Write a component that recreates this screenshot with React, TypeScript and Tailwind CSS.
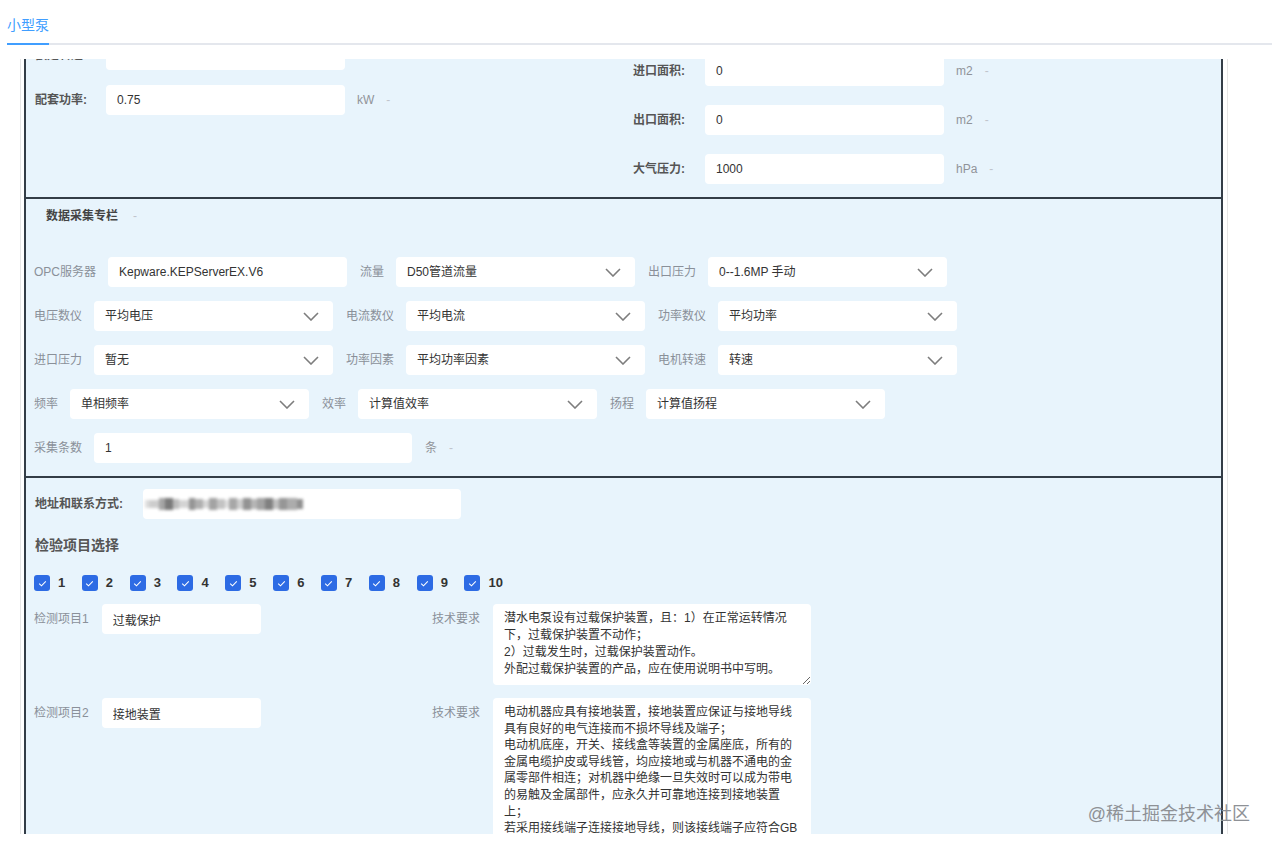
import React from "react";

function Chevron() {
  return (
    <svg width="16" height="9" viewBox="0 0 16 9" fill="none" className="shrink-0">
      <path d="M1 1L8 8L15 1" stroke="#7d7d7d" strokeWidth="1.6" />
    </svg>
  );
}

function TextInput({ value, w }: { value: string; w: string }) {
  return (
    <input
      readOnly
      value={value}
      className={`${w} h-[30px] shrink-0 rounded-[4px] bg-white px-[11px] text-[12px] text-[#333] outline-none`}
    />
  );
}

function SelectBox({ value }: { value: string }) {
  return (
    <div className="flex h-[30px] w-[239px] shrink-0 items-center justify-between rounded-[4px] bg-white pl-[11px] pr-[14px] text-[12px] text-[#333]">
      <span>{value}</span>
      <Chevron />
    </div>
  );
}

function UnitRow({
  label,
  value,
  unit,
  labelCls,
}: {
  label: string;
  value: string;
  unit: string;
  labelCls: string;
}) {
  return (
    <div className="flex h-[30px] items-center">
      <span className={`${labelCls} shrink-0 whitespace-nowrap text-[12px] font-bold leading-[30px] text-[#555]`}>{label}</span>
      <TextInput value={value} w="w-[239px]" />
      <span className="ml-[12px] text-[12px] text-[#909399]">{unit}</span>
      <span className="ml-[12px] text-[12px] text-[#c0c4cc]">-</span>
    </div>
  );
}

function GrayLabel({ children }: { children: React.ReactNode }) {
  return <span className="mr-[12px] shrink-0 whitespace-nowrap text-[12px] leading-[30px] text-[#8a9099]">{children}</span>;
}

function Gap() {
  return <span className="w-[13px] shrink-0" />;
}

function Check({ n }: { n: number }) {
  return (
    <div className="mr-[16.6px] flex items-center gap-[8px]">
      <span className="flex h-[16px] w-[16px] items-center justify-center rounded-[3px] bg-[#2d6be4]">
        <svg width="9" height="7" viewBox="0 0 9 7" fill="none">
          <path d="M1.2 3.6L3.5 5.8L7.8 1.3" stroke="white" strokeWidth="1.1" />
        </svg>
      </span>
      <span className="text-[13px] font-bold leading-[16px] text-[#333]">{n}</span>
    </div>
  );
}

const blurBlocks: [number, number, string][] = [
  [4, 8, "#dedede"],
  [10, 8, "#cdcdcd"],
  [6, 12, "#a5a5a5"],
  [8, 12, "#7a7a7a"],
  [6, 10, "#bcbcbc"],
  [10, 8, "#d4d4d4"],
  [6, 12, "#959595"],
  [8, 10, "#afafaf"],
  [6, 8, "#d6d6d6"],
  [8, 12, "#a3a3a3"],
  [8, 10, "#c3c3c3"],
  [4, 8, "#e0e0e0"],
  [8, 12, "#a7a7a7"],
  [6, 10, "#cdcdcd"],
  [8, 12, "#939393"],
  [6, 10, "#b6b6b6"],
  [8, 12, "#a2a2a2"],
  [8, 12, "#808080"],
  [6, 10, "#c0c0c0"],
  [8, 12, "#969696"],
  [10, 12, "#acacac"],
  [6, 10, "#909090"],
];

const ta1 =
  "潜水电泵设有过载保护装置，且：1）在正常运转情况下，过载保护装置不动作；\n2）过载发生时，过载保护装置动作。\n外配过载保护装置的产品，应在使用说明书中写明。";
const ta2 =
  "电动机器应具有接地装置，接地装置应保证与接地导线具有良好的电气连接而不损坏导线及端子；\n电动机底座，开关、接线盒等装置的金属座底，所有的金属电缆护皮或导线管，均应接地或与机器不通电的金属零部件相连；对机器中绝缘一旦失效时可以成为带电的易触及金属部件，应永久并可靠地连接到接地装置上；\n若采用接线端子连接接地导线，则该接线端子应符合GB 14048.7 的规定。";

export default function App() {
  return (
    <div className="relative h-[848px] w-[1272px] overflow-hidden bg-white font-['Liberation_Sans','Noto_Sans_CJK_SC',sans-serif]">
      {/* Tabs */}
      <div className="ml-[7px] flex h-[45px] border-b-2 border-[#e4e7ed]">
        <div className="-mb-[2px] flex h-[45px] items-center border-b-2 border-[#409eff] pt-[7px] text-[14px] leading-[20px] text-[#409eff]">
          小型泵
        </div>
      </div>

      {/* Scroll area */}
      <div className="ml-[20px] mt-[14px] h-[775px] w-[1208px] overflow-hidden border-x border-[#e6e6e6] pl-[3px] pr-[4px]">
        <div className="-mt-[120px] flex flex-col divide-y-2 divide-[#333d47] border-2 border-[#333d47] bg-[#e8f4fc]">
          {/* Section 1 */}
          <div className="flex">
            <div className="flex w-[579px] shrink-0 flex-col gap-[15px] pt-[9px]">
              <UnitRow labelCls="w-[80px] pl-[9px]" label="额定流量:" value="5" unit="m³/h" />
              <UnitRow labelCls="w-[80px] pl-[9px]" label="额定扬程:" value="12" unit="m" />
              <UnitRow labelCls="w-[80px] pl-[9px]" label="额定转速:" value="2850" unit="r/min" />
              <UnitRow labelCls="w-[80px] pl-[9px]" label="配套功率:" value="0.75" unit="kW" />
            </div>
            <div className="flex flex-col gap-[19px] pb-[13px] pt-[17px]">
              <UnitRow labelCls="w-[100px] pr-[20px] text-right" label="进口直径:" value="0" unit="mm" />
              <UnitRow labelCls="w-[100px] pr-[20px] text-right" label="出口直径:" value="0" unit="mm" />
              <UnitRow labelCls="w-[100px] pr-[20px] text-right" label="进口面积:" value="0" unit="m2" />
              <UnitRow labelCls="w-[100px] pr-[20px] text-right" label="出口面积:" value="0" unit="m2" />
              <UnitRow labelCls="w-[100px] pr-[20px] text-right" label="大气压力:" value="1000" unit="hPa" />
            </div>
          </div>

          {/* Section 2 */}
          <div className="pb-[13px] pt-[8px]">
            <div className="flex items-center pl-[20px] text-[12px] leading-[18px]">
              <span className="font-bold text-[#444]">数据采集专栏</span>
              <span className="ml-[15px] text-[#c0c4cc]">-</span>
            </div>
            <div className="mt-[32px] flex flex-col gap-[14px] pl-[8px]">
              <div className="flex items-center">
                <GrayLabel>OPC服务器</GrayLabel>
                <TextInput value="Kepware.KEPServerEX.V6" w="w-[239px]" />
                <Gap />
                <GrayLabel>流量</GrayLabel>
                <SelectBox value="D50管道流量" />
                <Gap />
                <GrayLabel>出口压力</GrayLabel>
                <SelectBox value="0--1.6MP 手动" />
              </div>
              <div className="flex items-center">
                <GrayLabel>电压数仪</GrayLabel>
                <SelectBox value="平均电压" />
                <Gap />
                <GrayLabel>电流数仪</GrayLabel>
                <SelectBox value="平均电流" />
                <Gap />
                <GrayLabel>功率数仪</GrayLabel>
                <SelectBox value="平均功率" />
              </div>
              <div className="flex items-center">
                <GrayLabel>进口压力</GrayLabel>
                <SelectBox value="暂无" />
                <Gap />
                <GrayLabel>功率因素</GrayLabel>
                <SelectBox value="平均功率因素" />
                <Gap />
                <GrayLabel>电机转速</GrayLabel>
                <SelectBox value="转速" />
              </div>
              <div className="flex items-center">
                <GrayLabel>频率</GrayLabel>
                <SelectBox value="单相频率" />
                <Gap />
                <GrayLabel>效率</GrayLabel>
                <SelectBox value="计算值效率" />
                <Gap />
                <GrayLabel>扬程</GrayLabel>
                <SelectBox value="计算值扬程" />
              </div>
              <div className="flex items-center">
                <GrayLabel>采集条数</GrayLabel>
                <TextInput value="1" w="w-[318px]" />
                <span className="ml-[13px] text-[12px] text-[#909399]">条</span>
                <span className="ml-[12px] text-[12px] text-[#c0c4cc]">-</span>
              </div>
            </div>
          </div>

          {/* Section 3 */}
          <div className="pb-[40px] pt-[11px]">
            <div className="flex items-center pl-[9px]">
              <span className="w-[108px] shrink-0 whitespace-nowrap text-[12px] font-bold leading-[30px] text-[#555]">地址和联系方式:</span>
              <div className="flex h-[30px] w-[318px] shrink-0 items-center rounded-[4px] bg-white pl-[2px]">
                <div className="flex items-center blur-[1.5px]">
                  {blurBlocks.map(([w, h, c], i) => (
                    <span key={i} style={{ width: w, height: h, background: c }} />
                  ))}
                </div>
              </div>
            </div>
            <div className="mt-[16px] pl-[9px] text-[14px] font-bold leading-[20px] text-[#555]">检验项目选择</div>
            <div className="mt-[20px] flex items-center pl-[8px]">
              {[1, 2, 3, 4, 5, 6, 7, 8, 9, 10].map((n) => (
                <Check key={n} n={n} />
              ))}
            </div>
            <div className="mt-[13px] flex flex-col gap-[13px] pl-[8px]">
              <div className="flex items-start">
                <div className="flex w-[398px] shrink-0 items-center">
                  <span className="mr-[13px] whitespace-nowrap text-[12px] leading-[30px] text-[#8a9099]">检测项目1</span>
                  <TextInput value="过载保护" w="w-[159px]" />
                </div>
                <span className="mr-[13px] whitespace-nowrap text-[12px] leading-[30px] text-[#8a9099]">技术要求</span>
                <textarea
                  readOnly
                  value={ta1}
                  className="h-[81px] w-[318px] shrink-0 overflow-hidden rounded-[4px] bg-white pb-[4px] pl-[11px] pr-[13px] pt-[6px] text-[12px] leading-[17px] text-[#333] outline-none"
                />
              </div>
              <div className="flex items-start">
                <div className="flex w-[398px] shrink-0 items-center">
                  <span className="mr-[13px] whitespace-nowrap text-[12px] leading-[30px] text-[#8a9099]">检测项目2</span>
                  <TextInput value="接地装置" w="w-[159px]" />
                </div>
                <span className="mr-[13px] whitespace-nowrap text-[12px] leading-[30px] text-[#8a9099]">技术要求</span>
                <textarea
                  readOnly
                  value={ta2}
                  className="h-[200px] w-[318px] shrink-0 overflow-hidden rounded-[4px] bg-white pb-[4px] pl-[11px] pr-[13px] pt-[6px] text-[12px] leading-[16.6px] text-[#333] outline-none"
                />
              </div>
            </div>
          </div>
        </div>
      </div>

      {/* Watermark */}
      <div className="pointer-events-none absolute right-[22px] top-[802px] text-[18px] leading-[24px] text-[#8e9196]">
        @稀土掘金技术社区
      </div>
    </div>
  );
}
